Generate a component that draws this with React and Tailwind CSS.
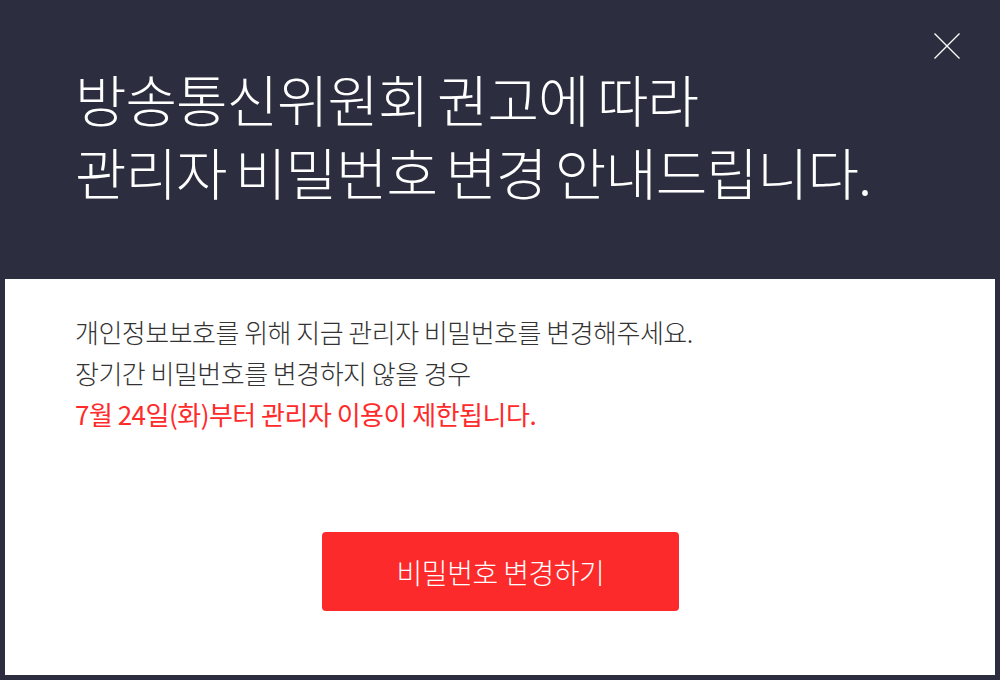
export default function App() {
  const font = { fontFamily: '"Noto Sans CJK KR", "Noto Sans", sans-serif' };
  return (
    <div className="w-[1000px] h-[680px] bg-[#2c2e3f] flex flex-col px-[5px] pb-[5px]" style={font}>
      <div className="relative h-[279px] shrink-0 pl-[70px] pt-[61px]">
        <h1 className="text-[56px] leading-[73px] font-light text-white tracking-[-1px] [word-spacing:-3px]">
          방송통신위원회 권고에 따라
          <br />
          관리자 비밀번호 변경 안내드립니다.
        </h1>
        <button className="absolute left-[929px] top-[33px] w-[26px] h-[26px]" aria-label="close">
          <svg width="26" height="26" viewBox="0 0 26 26">
            <path d="M0.5 0.5 L25.5 25.5 M25.5 0.5 L0.5 25.5" stroke="#ffffff" strokeWidth="1.3" fill="none" />
          </svg>
        </button>
      </div>
      <div className="flex-1 bg-white pl-[70px] pt-[32px] flex flex-col">
        <p className="text-[26px] leading-[41px] font-light text-[#333333] tracking-[-0.5px]">
          개인정보보호를 위해 지금 관리자 비밀번호를 변경해주세요.
          <br />
          장기간 비밀번호를 변경하지 않을 경우
          <br />
          <span className="text-[#ff2a2a] font-normal">7월 24일(화)부터 관리자 이용이 제한됩니다.</span>
        </p>
        <div className="flex justify-center pr-[70px] mt-[98px]">
          <button className="w-[357px] h-[79px] rounded-[4px] bg-[#fc2a2a] text-white text-[28px] font-light tracking-[-0.5px] ml-[1px]">
            비밀번호 변경하기
          </button>
        </div>
      </div>
    </div>
  );
}
